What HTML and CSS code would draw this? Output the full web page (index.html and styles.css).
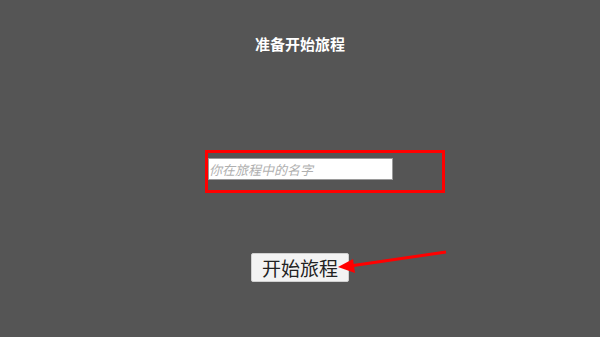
FILE: index.html
```html
<!DOCTYPE html>
<html lang="zh">
  <head>
    <meta charset="UTF-8" />
    <meta name="viewport" content="width=device-width, initial-scale=1.0" />
    <title>准备开始旅程</title>
    <link rel="stylesheet" href="styles.css">
  </head>
  <body>
    <div class="page">
      <div class="title">准备开始旅程</div>

      <div class="name-box">
        <input class="name-input" type="text" placeholder="你在旅程中的名字" />
      </div>

      <button class="start-button">开始旅程</button>

      <!-- 标注箭头 -->
      <svg class="arrow" width="600" height="337" viewBox="0 0 600 337">
        <line x1="446" y1="252" x2="350" y2="266" stroke="#ff0000" stroke-width="3" />
        <polygon points="338,267 353,259 355,273" fill="#ff0000" />
      </svg>
    </div>
  </body>
</html>
```

FILE: styles.css
```css
body {
  margin: 0;
  background-color: #555555;
  font-family: "Noto Sans CJK SC", "Noto Sans", sans-serif;
  overflow: hidden;
}

.page {
  position: relative;
  width: 600px;
  height: 337px;
  display: flex;
  flex-direction: column;
}

.title {
  padding-top: 36px;
  height: 16px;
  line-height: 16px;
  text-align: center;
  color: #ffffff;
  font-size: 15px;
  font-weight: bold;
}

.name-box {
  box-sizing: border-box;
  width: 240px;
  height: 43px;
  margin-top: 98px;
  margin-left: 205px;
  border: 3px solid #ff0000;
  padding-top: 5px;
}

.name-input {
  display: block;
  box-sizing: border-box;
  width: 185px;
  height: 22px;
  margin: 0;
  padding: 0;
  border: 1px solid #9a9a9a;
  background: #ffffff;
  font-family: "Noto Sans CJK SC", sans-serif;
  font-size: 13px;
  font-style: italic;
  outline: none;
}

.name-input::placeholder {
  color: #b0b0b0;
}

.start-button {
  align-self: center;
  box-sizing: border-box;
  width: 98px;
  height: 29px;
  margin-top: 60px;
  padding: 0;
  border: 1px solid #d0d0d0;
  border-radius: 2px;
  background: #f3f3f3;
  color: #222222;
  font-family: "Noto Sans CJK SC", sans-serif;
  font-size: 19px;
  line-height: 27px;
}

.arrow {
  position: absolute;
  top: 0;
  left: 0;
  pointer-events: none;
}
```
